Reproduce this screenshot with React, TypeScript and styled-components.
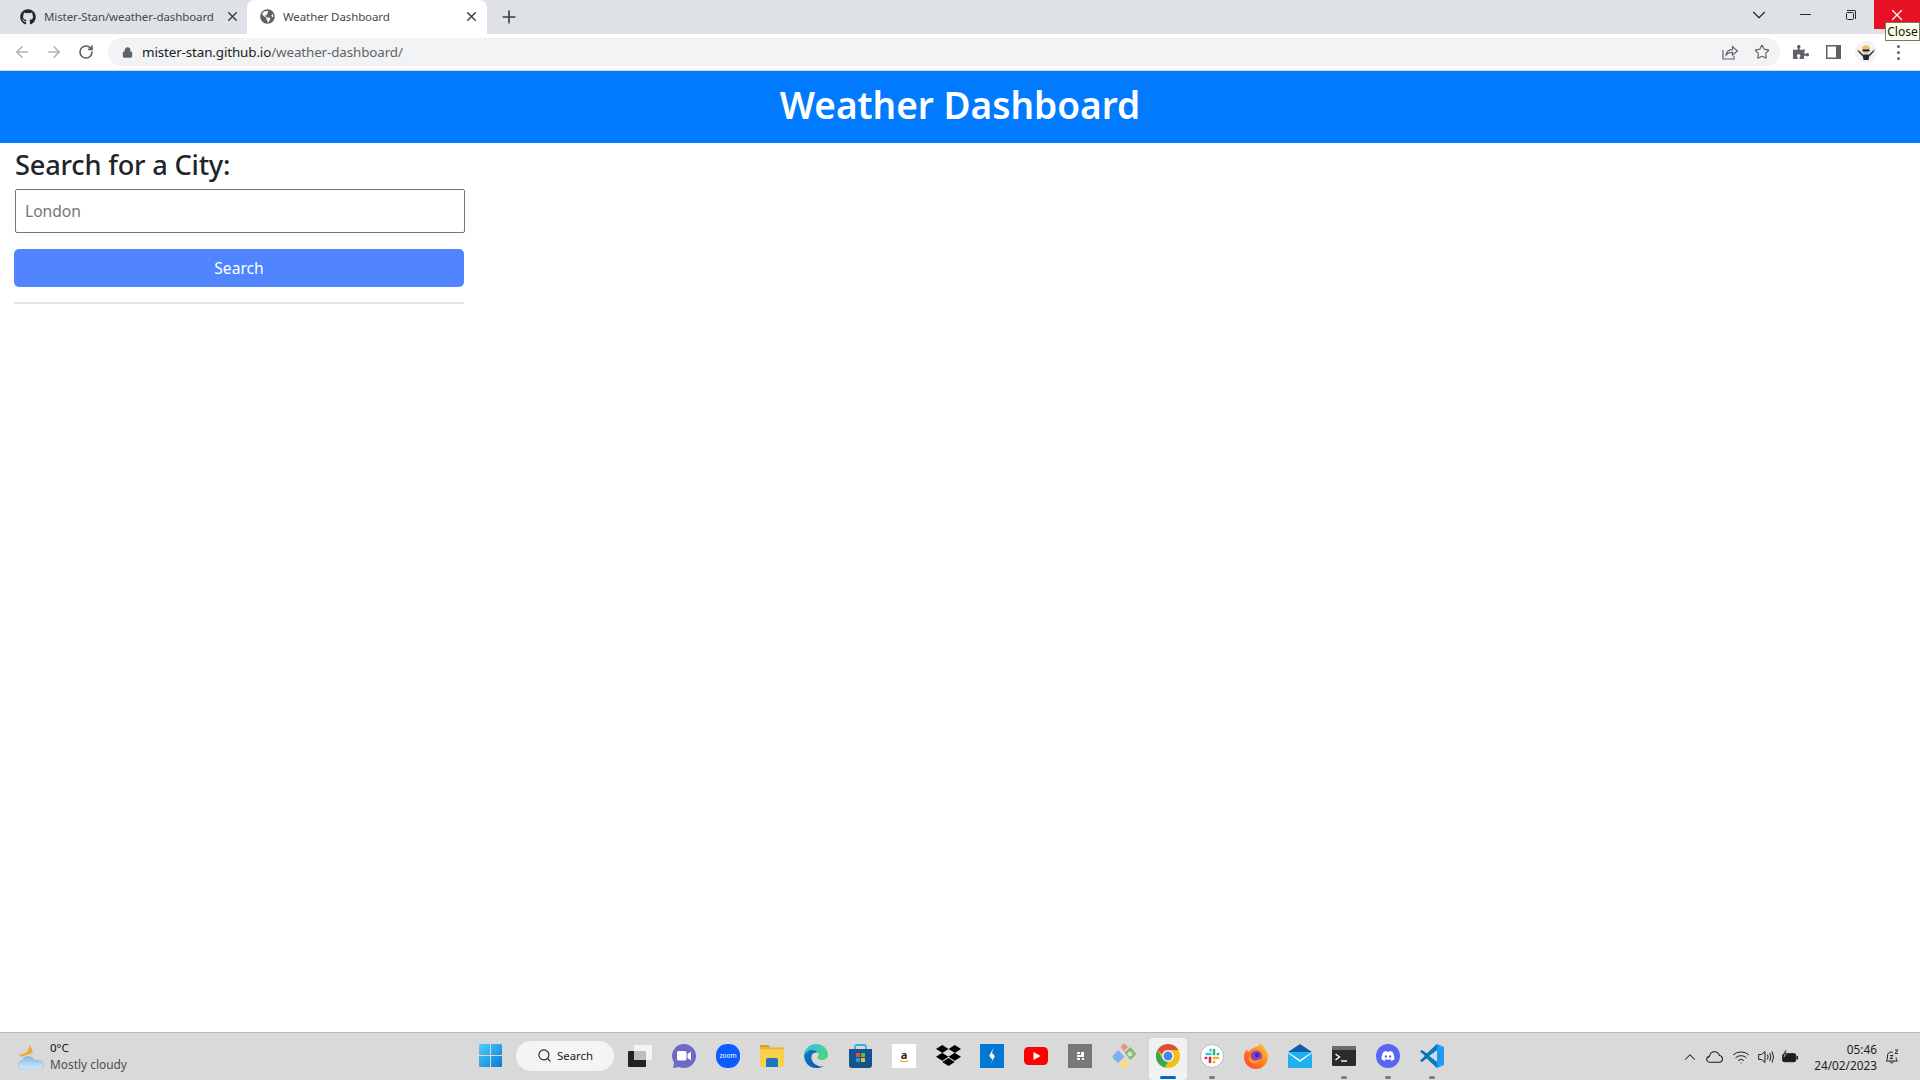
import React from 'react';
import styled, { createGlobalStyle } from 'styled-components';
import { ArrowLeft, ArrowRight, RotateCw, Lock, Star, X, Plus, ChevronDown, ChevronUp, Minus, Wifi, Search as SearchIcon } from 'lucide-react';
import { FaGithub, FaGlobeAmericas, FaDropbox, FaDiscord, FaPuzzlePiece } from 'react-icons/fa';

const SANS = `"Noto Sans", "Open Sans", "Liberation Sans", sans-serif`;

const GlobalStyle = createGlobalStyle`
  html, body { margin: 0; padding: 0; height: 100%; }
  body { font-family: ${SANS}; background: #fff; overflow: hidden; }
  #root { height: 100%; }
  * { box-sizing: border-box; }
`;

const Screen = styled.div`
  position: relative;
  display: flex;
  flex-direction: column;
  width: 1920px;
  height: 1080px;
  background: #fff;
`;

/* browser chrome */
const TabStrip = styled.div`
  display: flex;
  align-items: stretch;
  height: 34px;
  background: #dee1e6;
  flex: none;
`;
const Tab = styled.div<{ $active?: boolean }>`
  display: flex;
  align-items: center;
  width: ${p => (p.$active ? '240px' : '247px')};
  padding: ${p => (p.$active ? '0 8px 0 13px' : '0 7px 0 20px')};
  padding-bottom: 1px;
  background: ${p => (p.$active ? '#fff' : 'transparent')};
  border-radius: 8px 8px 0 0;
  color: #45484d;
  font-size: 11.5px;
  svg:first-child { flex: none; color: ${p => (p.$active ? '#5b5e63' : '#24292f')}; }
`;
const TabTitle = styled.span`
  flex: 1;
  margin-left: 8px;
  white-space: nowrap;
  overflow: hidden;
  letter-spacing: -0.1px;
`;
const NewTab = styled.div`
  display: flex;
  align-items: center;
  justify-content: center;
  width: 44px;
  color: #3c4043;
`;
const WindowControls = styled.div`
  display: flex;
  align-items: flex-start;
  margin-left: auto;
  height: 29px;
  color: #3c4043;
`;
const WinButton = styled.div<{ $w: number; $close?: boolean }>`
  display: flex;
  align-items: center;
  justify-content: center;
  width: ${p => p.$w}px;
  height: 29px;
  background: ${p => (p.$close ? '#e81123' : 'transparent')};
  color: ${p => (p.$close ? '#fff' : '#26282b')};
`;
const RestoreGlyph = styled.div`
  position: relative;
  width: 8px;
  height: 8px;
  margin: 2px 0 0 -2px;
  border: 1px solid #26282b;
  border-radius: 1.5px;
  &::after {
    content: '';
    position: absolute;
    top: -3px;
    right: -3px;
    width: 8px;
    height: 8px;
    border-top: 1px solid #26282b;
    border-right: 1px solid #26282b;
    border-radius: 0 2px 0 0;
  }
`;
const CloseTip = styled.div`
  position: absolute;
  top: 22px;
  right: 0;
  width: 35px;
  height: 19px;
  background: #ffffe8;
  border: 1px solid #767676;
  color: #111;
  font-size: 12px;
  line-height: 17px;
  text-align: center;
  white-space: nowrap;
  overflow: hidden;
`;
const Toolbar = styled.div`
  display: flex;
  align-items: center;
  height: 37px;
  background: #fff;
  border-bottom: 1px solid #d7d9dc;
  flex: none;
`;
const NavButton = styled.div<{ $dim?: boolean }>`
  display: flex;
  align-items: center;
  justify-content: center;
  width: 32px;
  color: ${p => (p.$dim ? '#aeb1b5' : '#5b5e63')};
`;
const NavGroup = styled.div`
  display: flex;
  width: 108px;
  padding-left: 6px;
`;
const Omnibox = styled.div`
  display: flex;
  align-items: center;
  width: 1672px;
  height: 28px;
  padding: 0 10px 0 14px;
  background: #f1f3f4;
  border-radius: 14px;
  font-size: 13.4px;
  color: #202124;
`;
const UrlPath = styled.span`
  color: #5f6368;
`;
const Url = styled.div`
  margin-left: 9px;
  letter-spacing: -0.12px;
`;
const OmniActions = styled.div`
  display: flex;
  align-items: center;
  gap: 16px;
  margin-left: auto;
  color: #5f6368;
`;
const Extensions = styled.div`
  display: flex;
  align-items: center;
  padding-left: 5px;
  color: #5f6368;
`;
const ExtSlot = styled.div<{ $w: number }>`
  display: flex;
  align-items: center;
  justify-content: center;
  width: ${p => p.$w}px;
`;
const KebabDot = styled.i`
  display: block;
  width: 3px;
  height: 3px;
  margin: 1.5px 0;
  border-radius: 50%;
  background: #5f6368;
`;
const Kebab = styled.div`
  display: flex;
  flex-direction: column;
`;

/* page */
const Header = styled.header`
  display: flex;
  align-items: center;
  justify-content: center;
  height: 72px;
  padding-bottom: 4px;
  background: #007bff;
  flex: none;
`;
const Title = styled.h1`
  margin: 0;
  color: #fff;
  font-size: 37px;
  font-weight: 600;
  line-height: 1.2;
`;
const Main = styled.main`
  flex: 1;
  padding: 3px 0 0 14px;
`;
const SearchColumn = styled.section`
  display: flex;
  flex-direction: column;
  width: 450px;
`;
const CityHeading = styled.h2`
  margin: 0 0 5px 1px;
  color: #212529;
  font-size: 27.2px;
  font-weight: 500;
  line-height: 38px;
  letter-spacing: -0.2px;
`;
const CityInput = styled.input`
  width: 450px;
  height: 44px;
  margin: 0 0 16px 1px;
  padding: 0 9px;
  background: #fff;
  border: 1px solid #767676;
  border-radius: 2px;
  color: #212529;
  font: 400 15.6px ${SANS};
  &::placeholder { color: #757575; opacity: 1; }
`;
const SearchButton = styled.button`
  width: 450px;
  height: 38px;
  padding: 0;
  background: #5085ff;
  border: 0;
  border-radius: 5px;
  color: #fff;
  font: 400 15.6px ${SANS};
`;
const Divider = styled.hr`
  width: 450px;
  height: 2px;
  margin: 15px 0 0;
  background: #e2e2e2;
  border: 0;
`;

/* windows taskbar */
const Taskbar = styled.footer`
  display: flex;
  align-items: center;
  height: 48px;
  padding-left: 18px;
  background: #d9d9d9;
  border-top: 1px solid #b9b9b9;
  flex: none;
`;
const Weather = styled.div`
  display: flex;
  align-items: center;
  width: 450px;
`;
const WeatherText = styled.div`
  display: flex;
  flex-direction: column;
  margin: -1px 0 0 6px;
  font-size: 11.9px;
  line-height: 16px;
`;
const WeatherTemp = styled.span`
  color: #111;
  font-size: 11.5px;
`;
const WeatherSky = styled.span`
  color: #4e4e4e;
`;
const AppSlot = styled.div<{ $active?: boolean }>`
  position: relative;
  display: flex;
  align-items: center;
  justify-content: center;
  width: 44px;
  height: 100%;
  padding-bottom: 2px;
  &::before {
    content: '';
    display: ${p => (p.$active ? 'block' : 'none')};
    position: absolute;
    top: 5px;
    bottom: 0;
    left: 3px;
    right: 3px;
    background: #f1f1f1;
    border-radius: 4px;
  }
  svg { position: relative; }
`;
const RunDot = styled.span<{ $active?: boolean }>`
  position: absolute;
  bottom: 1px;
  left: 50%;
  width: ${p => (p.$active ? '16px' : '6px')};
  height: 3px;
  margin-left: ${p => (p.$active ? '-8px' : '-3px')};
  border-radius: 2px;
  background: ${p => (p.$active ? '#0067c0' : '#7b7b7b')};
`;
const SearchPill = styled.div`
  display: flex;
  align-items: center;
  width: 98px;
  height: 30px;
  margin: 0 4px 2px;
  padding-left: 21px;
  background: #f4f4f4;
  border-radius: 15px;
  color: #222;
  font-size: 11.4px;
`;
const PillLabel = styled.span`
  margin-left: 5px;
`;
const AppRow = styled.div`
  display: flex;
  align-items: center;
  height: 100%;
`;
const Tray = styled.div`
  display: flex;
  align-items: center;
  margin-left: auto;
  padding-right: 21px;
  color: #1d1d1d;
`;
const TrayIcon = styled.div<{ $w: number }>`
  display: flex;
  align-items: center;
  justify-content: center;
  width: ${p => p.$w}px;
`;
const Clock = styled.div`
  display: flex;
  flex-direction: column;
  align-items: flex-end;
  margin: 0 8px 0 12px;
  color: #222;
  font-size: 11.8px;
  line-height: 16px;
`;

/* drawn icons */
const ShareIcon = () => (
  <svg width="16" height="16" viewBox="0 0 16 16" fill="none" stroke="#5f6368" strokeWidth="1.2">
    <path d="M1 6v9h11v-3" />
    <path d="M4 11c.6-3.6 3.4-5.4 6.5-5.4V2.6L15.4 7l-4.9 4.2V8.400C7.800 8.400 5.600 9.200 4 11z" />
  </svg>
);
const SidePanelIcon = () => (
  <svg width="15" height="14" viewBox="0 0 15 14">
    <path fill="#5f6368" fillRule="evenodd" d="M0 0h15v14H0zM1.500 1.500v11H10v-11z" />
    <rect x="10" y="1" width="4" height="12" fill="#5f6368" />
  </svg>
);
const Avatar = () => (
  <svg width="22" height="22" viewBox="0 0 22 22">
    <circle cx="11" cy="11" r="11" fill="#f1f3f4" />
    <path d="M7 8c0-5 8-5 8 0z" fill="#f0c63f" />
    <circle cx="11" cy="9.500" r="3.200" fill="#e9b98f" />
    <rect x="7.500" y="8.500" width="7" height="1.800" fill="#111" />
    <path d="M7.500 13.500h7l-1 5.500h-5z" fill="#1f2a36" />
    <path d="M8 13.500L3.500 9l-1 1 5 5.500zM14 13.500L18.500 9l1 1-5 5.500z" fill="#3a3a3a" />
    <circle cx="3" cy="9" r="1" fill="#e9b98f" />
    <circle cx="19" cy="9" r="1" fill="#e9b98f" />
  </svg>
);
const CloudSun = () => (
  <svg width="26" height="24" viewBox="0 0 26 24">
    <defs>
      <linearGradient id="cl" x1="0" y1="0" x2="0" y2="1">
        <stop offset="0" stopColor="#7fb8ea" />
        <stop offset="1" stopColor="#d8ebfb" />
      </linearGradient>
    </defs>
    <path d="M11 0c2.500 2.500 4 5 3.500 8-3 1-8 3-11 3.500C1.500 11 1 10 .8 9.400 3 9.600 6 9 8 7.500 10 5.500 11.500 3 11 0z" fill="#f2a93b" />
    <path d="M5 24c-3 0-5-1.500-5-4 0-2.200 1.700-3.800 4-4 1-2.800 3.300-4.500 6.200-4.500 2.900 0 5.200 1.500 6 3.800 4.500-.4 9.800 1 9.800 4.700 0 2.600-2.400 4-5.500 4z" fill="url(#cl)" stroke="#7fb1dd" strokeWidth=".5" />
  </svg>
);
const WindowsLogo = () => (
  <svg width="23" height="23" viewBox="0 0 23 23">
    <defs>
      <linearGradient id="wn" x1="0" y1="0" x2="1" y2="1">
        <stop offset="0" stopColor="#4fd0f7" />
        <stop offset="1" stopColor="#0a78d4" />
      </linearGradient>
    </defs>
    <path d="M0 1.500Q0 0 1.500 0H11v11H0zM12 0h9.500Q23 0 23 1.500V11H12zM0 12h11v11H1.500Q0 23 0 21.500zM12 12h11v9.500q0 1.500-1.500 1.500H12z" fill="url(#wn)" />
  </svg>
);
const TaskView = () => (
  <svg width="24" height="22" viewBox="0 0 24 22">
    <rect x="6" y="0" width="18" height="15" rx="1" fill="#f4f4f4" />
    <rect x="0" y="6" width="18" height="16" rx="1" fill="#222" />
    <rect x="6" y="6" width="12" height="9" fill="#bdbdbd" />
  </svg>
);
const TeamsChat = () => (
  <svg width="24" height="24" viewBox="0 0 24 24">
    <path d="M12 0a12 12 0 1 1-5 22.900L1 24l1-5.500A12 12 0 0 1 12 0z" fill="#6d69c6" />
    <rect x="5" y="7" width="9.500" height="9.500" rx="1.500" fill="#fff" />
    <path d="M15.500 10l3.500-2.500v9L15.500 14z" fill="#fff" />
  </svg>
);
const ZoomLogo = () => (
  <svg width="24" height="24" viewBox="0 0 24 24">
    <rect width="24" height="24" rx="11" fill="#0b5cff" />
    <text x="12" y="14" textAnchor="middle" fontSize="6.500" fontFamily={SANS} fill="#fff">zoom</text>
  </svg>
);
const FolderIcon = () => (
  <svg width="24" height="22" viewBox="0 0 24 22">
    <path d="M0 1.500Q0 0 1.500 0H8l3 3H0z" fill="#d99a1c" />
    <rect x="0" y="2.500" width="24" height="19.500" rx="1" fill="#fbd04a" />
    <rect x="0" y="2.500" width="24" height="2" fill="#e7b53a" />
    <path d="M6 15q0-2 2-2h8q2 0 2 2v7H6z" fill="#1c76c4" />
  </svg>
);
const EdgeLogo = () => (
  <svg width="24" height="24" viewBox="0 0 24 24">
    <defs>
      <linearGradient id="ed1" x1="0" y1="0" x2="1" y2="1">
        <stop offset="0" stopColor="#33bfe8" />
        <stop offset="1" stopColor="#52d66f" />
      </linearGradient>
      <linearGradient id="ed2" x1="0" y1="0" x2="1" y2="1">
        <stop offset="0" stopColor="#1279c9" />
        <stop offset="1" stopColor="#0b55a8" />
      </linearGradient>
    </defs>
    <path d="M0 11C1 4 6 0 12 0c7 0 12 5 12 11 0 3.500-3 5-6 5-3.500 0-5-1.500-4.500-3 .3-1 1.500-1.300 1-3-.5-2-3-3-5-3C5 7 1.500 8.500 0 11z" fill="url(#ed1)" />
    <path d="M0 11c1.500-3 5-5 8.500-5 2 0 4 1 5 2.500C9 8 7 11 7.500 14.500 8 18.500 12 22 17 22.500c1 .1 2 0 3-.3-2 1.200-5 1.800-8 1.800C5 24 0 18 0 11z" fill="url(#ed2)" />
  </svg>
);
const StoreLogo = () => (
  <svg width="23" height="24" viewBox="0 0 23 24">
    <path d="M6 5V3q0-2 2-2h7q2 0 2 2v2" fill="none" stroke="#2bb3ea" strokeWidth="1.800" />
    <path d="M0 5h23v16q0 3-3 3H3q-3 0-3-3z" fill="#14538f" />
    <rect x="7" y="9" width="4" height="4" fill="#e8502b" />
    <rect x="12" y="9" width="4" height="4" fill="#6ebb2e" />
    <rect x="7" y="14" width="4" height="4" fill="#1e9be8" />
    <rect x="12" y="14" width="4" height="4" fill="#f7b71d" />
  </svg>
);
const AmazonTile = () => (
  <svg width="24" height="24" viewBox="0 0 24 24">
    <rect width="24" height="24" fill="#fff" />
    <text x="12" y="14.500" textAnchor="middle" fontSize="11" fontWeight="700" fontFamily={SANS} fill="#222">a</text>
    <path d="M8 16.500q4 2.500 8 0" fill="none" stroke="#f2a028" strokeWidth="1.200" />
  </svg>
);
const BlueBolt = () => (
  <svg width="24" height="24" viewBox="0 0 24 24">
    <rect width="24" height="24" fill="#0078d4" />
    <path d="M13.500 4L9.500 11q-.5 1 .5 2l2.500 2.500L10.500 20l4-7q.5-1-.5-2l-2-2z" fill="#fff" />
  </svg>
);
const YouTubeTile = () => (
  <svg width="24" height="18" viewBox="0 0 24 18">
    <rect width="24" height="18" rx="4.500" fill="#f00" />
    <path d="M9.500 5l7 4-7 4z" fill="#fff" />
  </svg>
);
const GreyTile = () => (
  <svg width="24" height="24" viewBox="0 0 24 24">
    <rect width="24" height="24" fill="#787878" />
    <path d="M9 8h3v2H9zM13 8h3v3h-3zM9 11h7v2H9zM9 14h3v2H9zM14 14h2v2h-2z" fill="#fff" />
  </svg>
);
const DiamondApp = () => (
  <svg width="24" height="26" viewBox="0 0 24 26">
    <path d="M11.500 8L8.500 3.500 11 1q1-1 2 0l3 3-4.500 4.500z" fill="#ef8d89" />
    <path d="M12.500 9.500l6-5.500 5 6q1 1 0 2l-5 5zM18 8.500a2.500 2.500 0 1 0 .01 0z" fillRule="evenodd" fill="#80bd5c" />
    <path d="M6 7l6.500 6.500L6 20 1 15q-1-1 0-2.500z" fill="#7fb0ef" />
    <path d="M12 16l5 4-3.500 5q-1.500 1.500-3 0L7.500 20z" fill="#f8dc82" />
  </svg>
);
const ChromeLogo = () => (
  <svg width="24" height="24" viewBox="0 0 24 24">
    <circle cx="12" cy="12" r="12" fill="#f4bf1b" />
    <path d="M12 0a12 12 0 0 1 10.400 6H12a6 6 0 0 0-5.800 4.400L1.600 6A12 12 0 0 1 12 0z" fill="#dd4b39" />
    <path d="M1.600 6l5.200 9A6 6 0 0 0 12 18l-3.200 5.600A12 12 0 0 1 1.600 6z" fill="#34a853" />
    <circle cx="12" cy="12" r="5.800" fill="#fff" />
    <circle cx="12" cy="12" r="4.500" fill="#4285f4" />
  </svg>
);
const SlackLogo = () => (
  <svg width="24" height="24" viewBox="0 0 24 24">
    <circle cx="12" cy="12" r="11.500" fill="#fff" stroke="#b9b9b9" />
    <g strokeWidth="2.600" strokeLinecap="round">
      <path d="M6.500 10h4" stroke="#36c5f0" />
      <path d="M10.500 5.800v.6" stroke="#36c5f0" />
      <path d="M14 6v4.200" stroke="#2eb67d" />
      <path d="M17.800 10h.4" stroke="#2eb67d" />
      <path d="M13.800 14H18" stroke="#ecb22e" />
      <path d="M14 17.800v.4" stroke="#ecb22e" />
      <path d="M10 13.800V18" stroke="#e01e5a" />
      <path d="M5.800 14h.4" stroke="#e01e5a" />
    </g>
  </svg>
);
const FirefoxLogo = () => (
  <svg width="24" height="26" viewBox="0 0 24 26">
    <defs>
      <linearGradient id="ff" x1="1" y1="0" x2="0" y2="1">
        <stop offset="0" stopColor="#ffcf33" />
        <stop offset=".55" stopColor="#ff7a18" />
        <stop offset="1" stopColor="#ff3750" />
      </linearGradient>
    </defs>
    <path d="M16 0c3 3 8 8 8 14a12 12 0 0 1-24 0c0-3 1-6 3-8 0 2 1 3 2 3 1-3 4-4 7-5 2-.7 3.500-2 4-4z" fill="url(#ff)" />
    <circle cx="12.500" cy="13" r="5.500" fill="#8b3fc8" />
    <path d="M5 13c2 5 8 6 12 2-1 4.500-5 6-8 5.500S4 17 5 13z" fill="#ff9a1f" />
    <circle cx="13" cy="12" r="2.200" fill="#4b2a9c" />
  </svg>
);
const MailLogo = () => (
  <svg width="24" height="24" viewBox="0 0 24 24">
    <path d="M12 0l12 8v2H0V8z" fill="#0f5ea8" />
    <rect y="8" width="24" height="16" fill="#1fb0ee" />
    <path d="M0 8l12 8 12-8v1L12 18 0 9z" fill="#fff" />
  </svg>
);
const TerminalLogo = () => (
  <svg width="24" height="20" viewBox="0 0 24 20">
    <rect width="24" height="20" rx="1.500" fill="#2b2b2b" />
    <rect width="24" height="4" fill="#6b6b6b" />
    <path d="M3.500 8l4 3-4 3" fill="none" stroke="#fff" strokeWidth="1.400" />
    <path d="M9 15h6" stroke="#fff" strokeWidth="1.400" />
  </svg>
);
const DiscordLogo = () => (
  <svg width="24" height="24" viewBox="0 0 24 24">
    <circle cx="12" cy="12" r="12" fill="#5865f2" />
    <FaDiscord x="5" y="5" size={14} color="#fff" />
  </svg>
);
const VsCodeLogo = () => (
  <svg width="24" height="24" viewBox="0 0 24 24">
    <path d="M17 0l7 3v18l-7 3-10-10V10z" fill="#1f9cf0" />
    <path d="M17 6v12l-8-6z" fill="#d9d9d9" />
    <path d="M17 0L4 12l13 12v-6l-8-6 8-6z" fill="#0a78c4" />
    <path d="M0 7.500L2 6l7 5-2.500 2zM0 16.500L2 18l5-4-2-2z" fill="#0a6fb5" />
  </svg>
);
const CloudIcon = () => (
  <svg width="17" height="12" viewBox="0 0 17 12">
    <path d="M4 11.300C2 11.300.7 10 .7 8.400c0-1.500 1-2.600 2.600-2.800C4 2.800 6 .8 8.500.8c2.300 0 4.200 1.500 4.900 3.700 1.900.2 3 1.900 3 3.600 0 1.800-1.300 3.200-3.300 3.200z" fill="none" stroke="#1d1d1d" strokeWidth="1.100" />
  </svg>
);
const SpeakerIcon = () => (
  <svg width="17" height="14" viewBox="0 0 17 14" fill="none" stroke="#1d1d1d" strokeWidth="1">
    <path d="M.7 4.500h2.800L7 1.500v11L3.500 9.500H.7z" />
    <path d="M9.500 4.500q1.200 2.500 0 5M11.800 3q2 4 0 8M14 1.500q3 5.500 0 11" />
  </svg>
);
const BatteryIcon = () => (
  <svg width="16" height="14" viewBox="0 0 16 14">
    <rect x=".7" y="3.700" width="13" height="8" rx="1.500" fill="#1d1d1d" stroke="#1d1d1d" />
    <rect x="14.500" y="6" width="1.500" height="3.500" fill="#1d1d1d" />
    <path d="M3.500 0L1 4h2l-1 3 3.500-4.500H3.500L5 0z" fill="#1d1d1d" stroke="#d9d9d9" strokeWidth=".5" />
  </svg>
);
const BellSnooze = () => (
  <svg width="14" height="16" viewBox="0 0 14 16" fill="none" stroke="#1d1d1d" strokeWidth="1">
    <path d="M1 12c1-1 1.500-2 1.500-5C2.500 4.500 4 3 6 3c1 0 1.500.3 2 .6M1 12h11.500c-.8-.8-1.300-1.700-1.400-3.500M5 12.500c0 2 3 2 3.500 0" />
    <path d="M5 6.500h3L5 9.500h3M10 1h3l-3 3.500h3" strokeWidth=".9" />
  </svg>
);

type AppEntry = { key: string; icon: React.ReactNode; dot?: boolean; active?: boolean };

const apps: AppEntry[] = [
  { key: 'taskview', icon: <TaskView /> },
  { key: 'teams', icon: <TeamsChat /> },
  { key: 'zoom', icon: <ZoomLogo /> },
  { key: 'explorer', icon: <FolderIcon /> },
  { key: 'edge', icon: <EdgeLogo /> },
  { key: 'store', icon: <StoreLogo /> },
  { key: 'amazon', icon: <AmazonTile /> },
  { key: 'dropbox', icon: <FaDropbox size={25} color="#000" /> },
  { key: 'bolt', icon: <BlueBolt /> },
  { key: 'youtube', icon: <YouTubeTile /> },
  { key: 'grey', icon: <GreyTile /> },
  { key: 'diamond', icon: <DiamondApp /> },
  { key: 'chrome', icon: <ChromeLogo />, dot: true, active: true },
  { key: 'slack', icon: <SlackLogo />, dot: true },
  { key: 'firefox', icon: <FirefoxLogo /> },
  { key: 'mail', icon: <MailLogo /> },
  { key: 'terminal', icon: <TerminalLogo />, dot: true },
  { key: 'discord', icon: <DiscordLogo />, dot: true },
  { key: 'vscode', icon: <VsCodeLogo />, dot: true },
];

const BrowserChrome = () => (
  <>
    <TabStrip>
      <Tab>
        <FaGithub size={16} />
        <TabTitle>Mister-Stan/weather-dashboard</TabTitle>
        <X size={15} strokeWidth={2.4} color="#3c4043" />
      </Tab>
      <Tab $active>
        <FaGlobeAmericas size={15} />
        <TabTitle>Weather Dashboard</TabTitle>
        <X size={15} strokeWidth={2.4} color="#3c4043" />
      </Tab>
      <NewTab>
        <Plus size={20} strokeWidth={2} />
      </NewTab>
      <WindowControls>
        <WinButton $w={46}><ChevronDown size={22} strokeWidth={1.3} /></WinButton>
        <WinButton $w={46}><Minus size={17} strokeWidth={1.7} /></WinButton>
        <WinButton $w={46}><RestoreGlyph /></WinButton>
        <WinButton $w={46} $close><X size={18} strokeWidth={1.7} /></WinButton>
      </WindowControls>
    </TabStrip>
    <Toolbar>
      <NavGroup>
        <NavButton $dim><ArrowLeft size={18} strokeWidth={2} /></NavButton>
        <NavButton $dim><ArrowRight size={18} strokeWidth={2} /></NavButton>
        <NavButton><RotateCw size={16} strokeWidth={2.4} /></NavButton>
      </NavGroup>
      <Omnibox>
        <Lock size={11} fill="#5f6368" color="#5f6368" strokeWidth={2.4} />
        <Url>mister-stan.github.io<UrlPath>/weather-dashboard/</UrlPath></Url>
        <OmniActions>
          <ShareIcon />
          <Star size={16} strokeWidth={1.7} />
        </OmniActions>
      </Omnibox>
      <Extensions>
        <ExtSlot $w={32}><FaPuzzlePiece size={16} /></ExtSlot>
        <ExtSlot $w={32}><SidePanelIcon /></ExtSlot>
        <ExtSlot $w={33}><Avatar /></ExtSlot>
        <ExtSlot $w={32}>
          <Kebab>
            <KebabDot />
            <KebabDot />
            <KebabDot />
          </Kebab>
        </ExtSlot>
      </Extensions>
    </Toolbar>
  </>
);

const WindowsTaskbar = () => (
  <Taskbar>
    <Weather>
      <CloudSun />
      <WeatherText>
        <WeatherTemp>0°C</WeatherTemp>
        <WeatherSky>Mostly cloudy</WeatherSky>
      </WeatherText>
    </Weather>
    <AppRow>
      <AppSlot><WindowsLogo /></AppSlot>
      <SearchPill>
        <SearchIcon size={15} strokeWidth={1.8} />
        <PillLabel>Search</PillLabel>
      </SearchPill>
      {apps.map(app => (
        <AppSlot key={app.key} $active={app.active}>
          {app.icon}
          {app.dot && <RunDot $active={app.active} />}
        </AppSlot>
      ))}
    </AppRow>
    <Tray>
      <TrayIcon $w={22}><ChevronUp size={18} strokeWidth={1.4} /></TrayIcon>
      <TrayIcon $w={26}><CloudIcon /></TrayIcon>
      <TrayIcon $w={27}><Wifi size={18} strokeWidth={1.3} /></TrayIcon>
      <TrayIcon $w={24}><SpeakerIcon /></TrayIcon>
      <TrayIcon $w={24}><BatteryIcon /></TrayIcon>
      <Clock>
        <span>05:46</span>
        <span>24/02/2023</span>
      </Clock>
      <BellSnooze />
    </Tray>
  </Taskbar>
);

export default function App() {
  return (
    <Screen>
      <GlobalStyle />
      <BrowserChrome />
      <Header>
        <Title>Weather Dashboard</Title>
      </Header>
      <Main>
        <SearchColumn>
          <CityHeading>Search for a City:</CityHeading>
          <CityInput placeholder="London" />
          <SearchButton>Search</SearchButton>
          <Divider />
        </SearchColumn>
      </Main>
      <WindowsTaskbar />
      <CloseTip>Close</CloseTip>
    </Screen>
  );
}
